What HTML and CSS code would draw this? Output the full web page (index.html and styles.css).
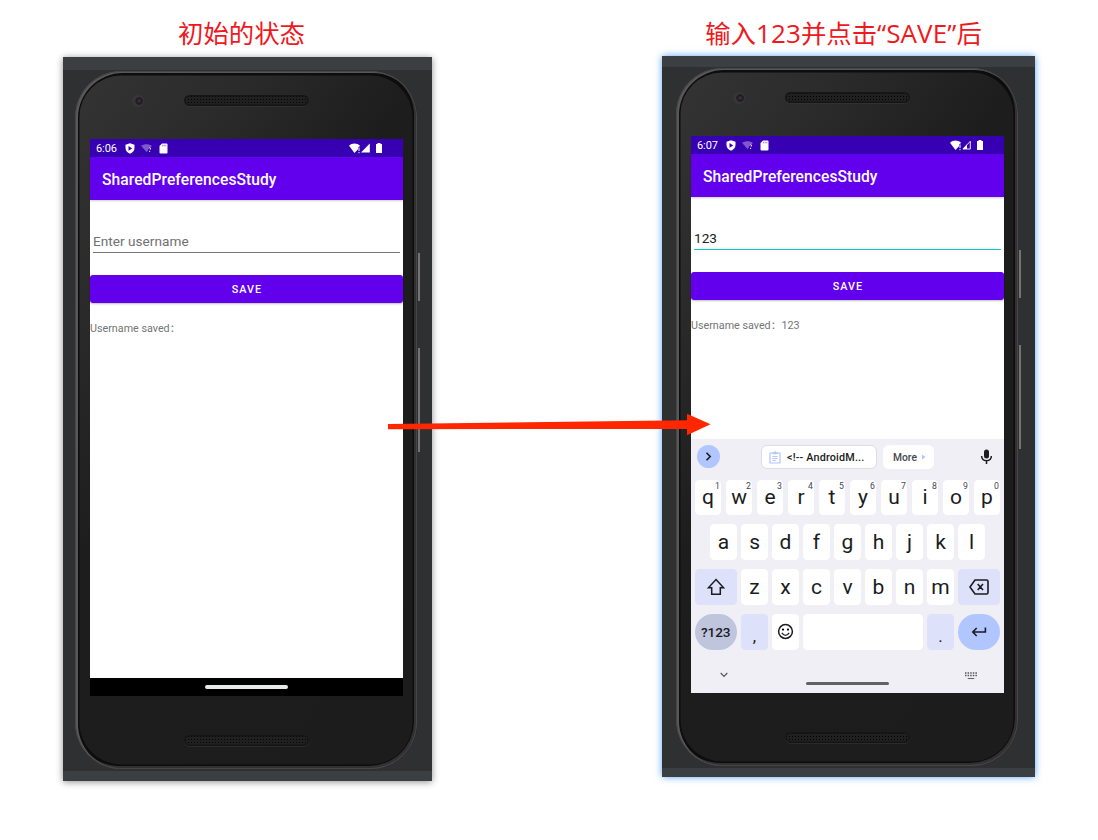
FILE: index.html
```
<!DOCTYPE html>
<html lang="zh-CN">
<head>
<meta charset="utf-8">
<title>SharedPreferencesStudy</title>
<link rel="stylesheet" href="styles.css">
</head>
<body>
<svg class="defs" width="0" height="0" aria-hidden="true">
  <symbol id="i-shield" viewBox="0 0 10 11"><path d="M5 .3 9.500 1.700V5C9.500 7.900 7.600 9.700 5 10.800 2.400 9.700.5 7.900.5 5V1.700Z" fill="#fff"/><path d="M3.500 3.100 7.200 5.400 3.500 7.700Z" fill="#3700b3"/></symbol>
  <symbol id="i-wifi-dim" viewBox="0 0 12 11"><path d="M0 2.800C3 .6 8 .6 11 2.800L9.500 4.500H7V7.500L5.500 9Z" fill="#fff" opacity=".35"/><path d="M7.400 5.300Q8.600 4.200 9.500 5.200 9.900 6.200 8.600 7M8.600 8V9" fill="none" stroke="#fff" opacity=".9"/></symbol>
  <symbol id="i-sd" viewBox="0 0 9 11"><path d="M3 .5H7.500Q8.500.5 8.500 1.500V9.500Q8.500 10.500 7.500 10.500H1.500Q.5 10.500.5 9.500V3Z" fill="#fff"/><path d="M3.600 1.800V3.300M5.200 1.800V3.300M6.800 1.800V3.300" stroke="#3700b3" stroke-width=".5"/></symbol>
  <symbol id="i-wifi" viewBox="0 0 12 11"><path d="M0 2.700C3-.2 8-.2 11 2.700L9.800 4.300H9V6.300L5.500 10Z" fill="#fff"/><path d="M10 4.500V8M10 9V10.200" stroke="#fff"/></symbol>
  <symbol id="i-cell" viewBox="0 0 9 10"><path d="M8.800.4V9.500H0Z" fill="#fff"/></symbol>
  <symbol id="i-cell-low" viewBox="0 0 9 10"><path d="M8.300 1.300V9H.9Z" fill="none" stroke="#fff" stroke-width=".9"/><path d="M5 4.500V9H.8Z" fill="#fff"/></symbol>
  <symbol id="i-batt" viewBox="0 0 6 10"><path d="M1.500 0H4.500V1H6V10H0V1H1.500Z" fill="#fff"/></symbol>
</svg>

<main class="board">
  <section class="shot shot-before">
    <h2 class="caption">初始的状态</h2>
    <div class="window">
      <div class="phone">
        <div class="bezel"><i class="camera"></i><i class="speaker"></i></div>
        <div class="screen">
          <div class="status"><span class="clock">6:06</span>
            <svg class="s-shield"><use href="#i-shield"/></svg><svg class="s-dim"><use href="#i-wifi-dim"/></svg><svg class="s-sd"><use href="#i-sd"/></svg>
            <svg class="s-wifi"><use href="#i-wifi"/></svg><svg class="s-cell"><use href="#i-cell"/></svg><svg class="s-batt"><use href="#i-batt"/></svg></div>
          <div class="appbar">SharedPreferencesStudy</div>
          <div class="content">
            <div class="field hint">Enter username</div>
            <div class="save">SAVE</div>
            <div class="saved">Username saved<span class="colon">：</span></div>
          </div>
          <div class="navbar"><i class="pill"></i></div>
        </div>
        <div class="chin"><i class="speaker"></i></div>
        <i class="side power"></i><i class="side volume"></i>
      </div>
    </div>
  </section>

  <section class="shot shot-after">
    <h2 class="caption">输入<span class="latin">123</span>并点击<span class="latin">“SAVE”</span>后</h2>
    <div class="window">
      <div class="phone">
        <div class="bezel"><i class="camera"></i><i class="speaker"></i></div>
        <div class="screen">
          <div class="status"><span class="clock">6:07</span>
            <svg class="s-shield"><use href="#i-shield"/></svg><svg class="s-dim"><use href="#i-wifi-dim"/></svg><svg class="s-sd"><use href="#i-sd"/></svg>
            <svg class="s-wifi"><use href="#i-wifi"/></svg><svg class="s-cell"><use href="#i-cell-low"/></svg><svg class="s-batt"><use href="#i-batt"/></svg></div>
          <div class="appbar">SharedPreferencesStudy</div>
          <div class="content">
            <div class="field focused">123</div>
            <div class="save">SAVE</div>
            <div class="saved">Username saved<span class="colon">：</span>123</div>
          </div>
          <div class="keyboard">
            <div class="strip">
              <span class="expand"><svg width="23" height="23" viewBox="0 0 23 23"><path d="M9.500 7.700 13.200 11.500 9.500 15.300" fill="none" stroke="#1b1b21" stroke-width="1.600"/></svg></span>
              <span class="chip clip"><svg width="12" height="13" viewBox="0 0 12 13"><path d="M1 2H11V12H1ZM3.500 5.500H8.500M3.500 7.500H8.500M3.500 9.500H7" fill="none" stroke="#b1c5ff" stroke-width="1.200"/><path d="M3.500 1.200H4.800Q6-.6 7.200 1.200H8.500V3.300H3.500Z" fill="#b1c5ff"/></svg><b>&lt;!-- AndroidM...</b></span>
              <span class="chip more">More<svg width="4" height="6" viewBox="0 0 4 6"><path d="M0 .5 3.500 3 0 5.500Z" fill="#b1c5ff"/></svg></span>
              <svg class="mic" width="13" height="16" viewBox="0 0 13 16"><rect x="4" y=".5" width="5" height="9" rx="2.500" fill="#1b1b21"/><path d="M1.600 7Q1.800 11.600 6.500 11.700 11.200 11.600 11.400 7M6.500 11.700V15" fill="none" stroke="#1b1b21" stroke-width="1.500"/></svg>
            </div>
            <div class="row">
              <span class="key">q<sup>1</sup></span><span class="key">w<sup>2</sup></span><span class="key">e<sup>3</sup></span><span class="key">r<sup>4</sup></span><span class="key">t<sup>5</sup></span><span class="key">y<sup>6</sup></span><span class="key">u<sup>7</sup></span><span class="key">i<sup>8</sup></span><span class="key">o<sup>9</sup></span><span class="key">p<sup>0</sup></span>
            </div>
            <div class="row">
              <span class="key">a</span><span class="key">s</span><span class="key">d</span><span class="key">f</span><span class="key">g</span><span class="key">h</span><span class="key">j</span><span class="key">k</span><span class="key">l</span>
            </div>
            <div class="row">
              <span class="key fn wide"><svg width="18" height="18" viewBox="0 0 18 18"><path d="M9 1.500 16.600 9.800H13.300V16.300H4.700V9.800H1.400Z" fill="none" stroke="#1b1b21" stroke-width="1.500"/></svg></span><span class="key">z</span><span class="key">x</span><span class="key">c</span><span class="key">v</span><span class="key">b</span><span class="key">n</span><span class="key">m</span><span class="key fn wide"><svg width="20" height="16" viewBox="0 0 20 16"><path d="M6 1H17.500Q19 1 19 2.500V13.500Q19 15 17.500 15H6L1 8ZM8.700 5 14 11M14 5 8.700 11" fill="none" stroke="#1b1b21" stroke-width="1.600"/></svg></span>
            </div>
            <div class="row">
              <span class="key wide sym">?123</span><span class="key fn punct">,</span><span class="key"><svg width="17" height="17" viewBox="0 0 17 17"><circle cx="8.500" cy="8.500" r="6.900" fill="none" stroke="#1b1b21" stroke-width="1.500"/><circle cx="6" cy="6.600" r="1.100"/><circle cx="11" cy="6.600" r="1.100"/><path d="M4.800 9.800Q8.500 14.800 12.200 9.800" fill="none" stroke="#1b1b21" stroke-width="1.300"/></svg></span><span class="key space"></span><span class="key fn punct">.</span><span class="key wide enter"><svg width="16" height="12" viewBox="0 0 16 12"><path d="M14.400 1.500V6H2M5.700 2 1.800 6 5.700 10" fill="none" stroke="#1b1b21" stroke-width="1.600"/></svg></span>
            </div>
            <div class="kbfoot">
              <svg width="8" height="6" viewBox="0 0 8 6"><path d="M.7 1 4 4.400 7.300 1" fill="none" stroke="#55555c" stroke-width="1.200"/></svg>
              <i class="pill"></i>
              <svg width="12" height="8" viewBox="0 0 12 8"><path d="M0 1H12M0 3.500H12" stroke="#55555b" stroke-width="1.400" stroke-dasharray="1.500 1.100"/><path d="M2.700 6.500H9.300" stroke="#66666c" stroke-width="1.100"/></svg>
            </div>
          </div>
        </div>
        <div class="chin"><i class="speaker"></i></div>
        <i class="side power"></i><i class="side volume"></i>
      </div>
    </div>
  </section>
  <svg class="arrow" width="324" height="24" viewBox="0 0 324 24"><path d="M0 11 299 7.200V.8L322.500 11.300 299 22.300V16L0 16.200Z" fill="#ff2600"/></svg>
</main>
</body>
</html>
```
FILE: styles.css
```
* { box-sizing: border-box; }
body { margin: 0; background: #fff; font-family: Roboto, "Noto Sans CJK SC", sans-serif; }
i { display: block; font-style: normal; }
svg { display: block; flex: none; }
.defs { position: absolute; }
.board { position: relative; width: 1098px; height: 840px; padding: 14px 63px 0; display: flex; justify-content: space-between; overflow: hidden; }
.shot-before { width: 369px; }
.shot-after { width: 373px; }

.caption { margin: 0; height: 43px; line-height: 39px; font-family: "Open Sans", "Noto Sans CJK SC", sans-serif; font-size: 25.400px; font-weight: 400; color: #f01820; text-align: center; white-space: nowrap; }
.shot-before .caption { padding-right: 12px; }
.shot-after .caption { height: 42px; padding-right: 10px; }
.latin { font-size: 26px; letter-spacing: .1px; }
.window { background: #2e3032; border: solid #3c3f41; border-width: 13px 0 10px; height: 724px; padding: 1px 0 0 12px; box-shadow: 0 1px 7px rgba(0,0,0,.45); }
.shot-after .window { height: 721px; border-width: 11px 0 9px; padding: 1px 0 0 14px; box-shadow: 0 0 7px rgba(50,140,245,.8); }

.phone { position: relative; width: 342px; height: 698px; padding: 0 14px 0 15px; border-radius: 46px; background: linear-gradient(125deg, #343434 0, #2b2b2b 20%, #1d1d1d 42%, #1c1c1c 100%); box-shadow: inset 0 0 0 1px #474546, inset 2px 1px 0 1px #5a5758, inset -2px -2px 0 1px #333031, inset 0 0 0 4.500px #0d0d0d; }
.bezel { height: 68px; display: flex; align-items: flex-start; padding: 23.500px 0 0 42px; }
.camera { width: 12px; height: 12px; border-radius: 50%; background: radial-gradient(circle at 60% 50%, #49323a 0, #1d1b24 28%, #252329 40%, #383637 45%, #353435 100%); }
.speaker { width: 125px; height: 11px; border-radius: 6px; background: radial-gradient(circle, #030303 .8px, transparent 1px) 0 0 / 3px 3px #202020; box-shadow: inset 0 0 0 1.500px #151515, 0 .5px 0 #3a3a3a; }
.bezel .speaker { margin-left: 40px; }
.chin { padding: 39px 0 0 94px; }
.side { position: absolute; left: 343px; width: 2px; background: #767374; }
.power { top: 182px; height: 48px; }
.volume { top: 277px; height: 104px; }

.screen { width: 313px; height: 557px; background: #fff; display: flex; flex-direction: column; }
.status { height: 18px; background: #3700b3; color: #fff; display: flex; align-items: center; padding: 0 20px 0 6px; }
.clock { width: 28.500px; font-size: 11px; line-height: 18px; padding-top: 1px; letter-spacing: -.1px; }
.s-shield { width: 10px; height: 11px; }
.s-dim { width: 12px; height: 11px; margin-left: 6px; }
.s-sd { width: 9px; height: 11px; margin-left: 6px; }
.s-wifi { width: 12px; height: 11px; margin-left: auto; }
.s-cell { width: 9px; height: 10px; }
.s-batt { width: 6px; height: 10px; margin: 0 1px 0 6px; }
.appbar { position: relative; height: 43px; padding-left: 12px; background: #6200ee; color: #fff; font-size: 15.600px; font-weight: 500; line-height: 46px; letter-spacing: .07px; box-shadow: 0 1px 2px rgba(0,0,0,.2); }
.content { flex: 1; padding-top: 27px; }
.field { margin: 0 3px; height: 26px; line-height: 29px; font-size: 13.600px; letter-spacing: .03px; color: #212121; border-bottom: 1px solid #777; }
.hint { color: #707070; }
.focused { border-bottom-color: #03cfc0; }
.save { margin-top: 22px; height: 28px; border-radius: 3px; background: #6200ee; color: #fff; text-align: center; font-size: 10.800px; font-weight: 500; line-height: 29px; letter-spacing: 1px; padding-left: 1px; box-shadow: 0 1px 2px rgba(0,0,0,.25); }
.saved { margin-top: 18px; height: 16px; line-height: 16px; font-size: 10.750px; color: #757575; white-space: nowrap; }
.navbar { height: 18px; background: #000; display: flex; justify-content: center; padding-top: 7px; }
.pill { width: 83px; height: 4px; border-radius: 2px; background: #e8eaea; }

.keyboard { height: 254px; background: #f0eff6; padding: 0 3.600px; }
.strip { height: 40.500px; display: flex; align-items: flex-start; padding: 6px 0 0 2.400px; }
.expand { width: 23px; height: 23px; border-radius: 50%; background: #b1c5ff; }
.chip { height: 24px; border-radius: 6px; background: #fff; display: flex; align-items: center; font-size: 10.800px; color: #1b1b21; white-space: nowrap; }
.clip { width: 116px; margin-left: 41px; padding-left: 7px; gap: 6px; border: 1px solid #dddde3; }
.clip b { font-weight: 500; letter-spacing: .18px; }
.more { width: 51px; margin-left: 6px; padding-left: 10px; gap: 5px; color: #45464f; font-weight: 500; font-size: 10.300px; }
.mic { margin: 4px 7px 0 auto; }
.row { height: 35.700px; margin-bottom: 9.200px; display: flex; justify-content: center; gap: 4.300px; }
.key { position: relative; width: 26.700px; flex: none; border-radius: 4.500px; background: #fff; color: #1b1b21; display: flex; align-items: center; justify-content: center; font-size: 21px; line-height: 35px; }
.key sup { position: absolute; right: 1.500px; top: 1px; font-size: 8.700px; line-height: 11px; color: #45464f; }
.wide { width: 42.200px; }
.fn { background: #dde1f9; }
.punct { align-items: flex-end; font-size: 17px; line-height: 27px; }
.sym { border-radius: 18px; background: #bfc5dd; font-size: 13.600px; font-weight: 500; letter-spacing: -.1px; padding-top: 1px; }
.space { width: 119.700px; }
.enter { border-radius: 18px; background: #b1c5ff; }
.kbfoot { height: 34px; display: flex; justify-content: space-between; align-items: flex-start; padding: 13px 23px 0 25px; }
.kbfoot .pill { height: 3px; margin: 10px 0 0 2px; background: #626166; }
.arrow { position: absolute; left: 388px; top: 413px; }
```
